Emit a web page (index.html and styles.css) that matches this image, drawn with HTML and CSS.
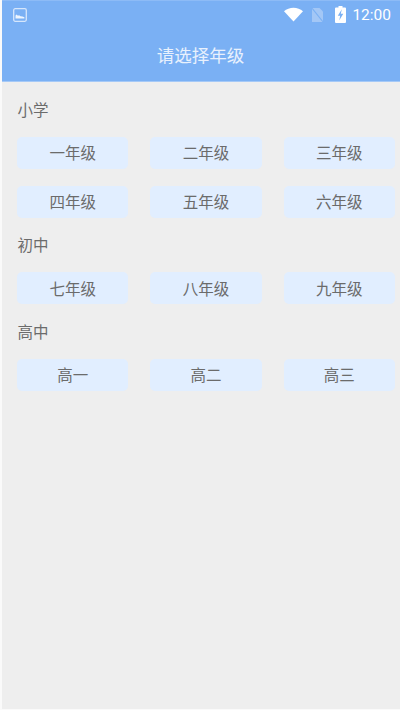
FILE: index.html
```html
<!DOCTYPE html>
<html lang="zh-CN">
<head>
    <meta charset="UTF-8">
    <title>请选择年级</title>
    <link rel="stylesheet" href="styles.css">
</head>
<body>
    <div class="phone">
        <header class="header">
            <div class="status-bar">
                <svg class="icon-picture" width="14" height="14" viewBox="0 0 14 14">
                    <rect x="0.7" y="0.7" width="12.6" height="12.6" rx="1.5" fill="none" stroke="#d6e6fb" stroke-width="1.3"/>
                    <path d="M2.5 10.5V7.6l1.2-1 1.2 1.2 1.2-.6 1.4 1 2 .2 1.9.9v1.2z" fill="#eef5fe"/>
                </svg>
                <div class="status-right">
                    <svg width="19" height="15" viewBox="0 0 20 15">
                        <path d="M0 4.2C2.7 1.7 6.2.4 10 .4s7.300 1.300 10 3.800L10 14.800z" fill="#fff"/>
                    </svg>
                    <svg class="icon-sim" width="13" height="16" viewBox="0 0 13 16">
                        <path d="M1 1h7.500L12 4.500V15H1z" fill="#a3c7f6"/>
                        <path d="M0.500 0.500l12 15" stroke="#7ab0f4" stroke-width="1.200"/>
                    </svg>
                    <svg class="icon-battery" width="11" height="17" viewBox="0 0 11 17">
                        <path d="M3.500 0h4v1.500H10a1 1 0 0 1 1 1V16a1 1 0 0 1-1 1H1a1 1 0 0 1-1-1V2.500a1 1 0 0 1 1-1h2.500z" fill="#fff"/>
                        <path d="M6.800 3.200L2.800 9.800h2.400L4.200 14.500 8.300 7.800H5.800z" fill="#7ab0f4"/>
                    </svg>
                    <span class="clock">12:00</span>
                </div>
            </div>
            <h1 class="title">请选择年级</h1>
        </header>

        <main class="content">
            <div class="section-label">小学</div>
            <div class="grade-grid">
                <div class="grade-btn">一年级</div>
                <div class="grade-btn">二年级</div>
                <div class="grade-btn">三年级</div>
                <div class="grade-btn">四年级</div>
                <div class="grade-btn">五年级</div>
                <div class="grade-btn">六年级</div>
            </div>

            <div class="section-label">初中</div>
            <div class="grade-grid">
                <div class="grade-btn">七年级</div>
                <div class="grade-btn">八年级</div>
                <div class="grade-btn">九年级</div>
            </div>

            <div class="section-label">高中</div>
            <div class="grade-grid">
                <div class="grade-btn">高一</div>
                <div class="grade-btn">高二</div>
                <div class="grade-btn">高三</div>
            </div>
        </main>
    </div>
</body>
</html>
```

FILE: styles.css
```css
* {
    box-sizing: border-box;
}

body {
    margin: 0;
    font-family: "Noto Sans CJK SC", "Noto Sans", sans-serif;
}

.phone {
    width: 400px;
    height: 710px;
    background-color: #eee;
    border-left: 2px solid #fafafa;
    border-bottom: 1px solid #fafafa;
    overflow: hidden;
}

.header {
    height: 82px;
    margin-left: -2px;
    background-color: #7ab0f4;
    border-top: 1px solid #8dbbf6;
    border-left: 1px solid #8dbbf6;
    border-bottom: 1px solid #a5c9f7;
}

.status-bar {
    height: 27px;
    padding: 0 9px 0 12px;
    display: flex;
    align-items: center;
    justify-content: space-between;
}

.status-right {
    display: flex;
    align-items: center;
}

.icon-sim {
    margin-left: 8px;
}

.icon-battery {
    margin-left: 11px;
}

.clock {
    margin-left: 6.500px;
    font-family: Roboto, sans-serif;
    font-size: 15.500px;
    color: #fff;
}

.title {
    margin: 0;
    height: 53px;
    line-height: 53px;
    text-align: center;
    font-size: 17.500px;
    font-weight: normal;
    color: #e8f1fd;
}

.content {
    padding: 0 5px 0 15px;
}

.section-label {
    height: 54.500px;
    padding-left: 0.500px;
    padding-bottom: 1px;
    display: flex;
    align-items: center;
    font-size: 15.500px;
    color: #6b6b6b;
}

.grade-grid {
    display: grid;
    grid-template-columns: repeat(3, 1fr);
    column-gap: 22px;
    row-gap: 17px;
}

.grade-btn {
    height: 32px;
    padding-bottom: 1px;
    display: flex;
    align-items: center;
    justify-content: center;
    background-color: #e1eeff;
    border-radius: 5px;
    font-size: 15.500px;
    color: #6b6b6b;
}
```
